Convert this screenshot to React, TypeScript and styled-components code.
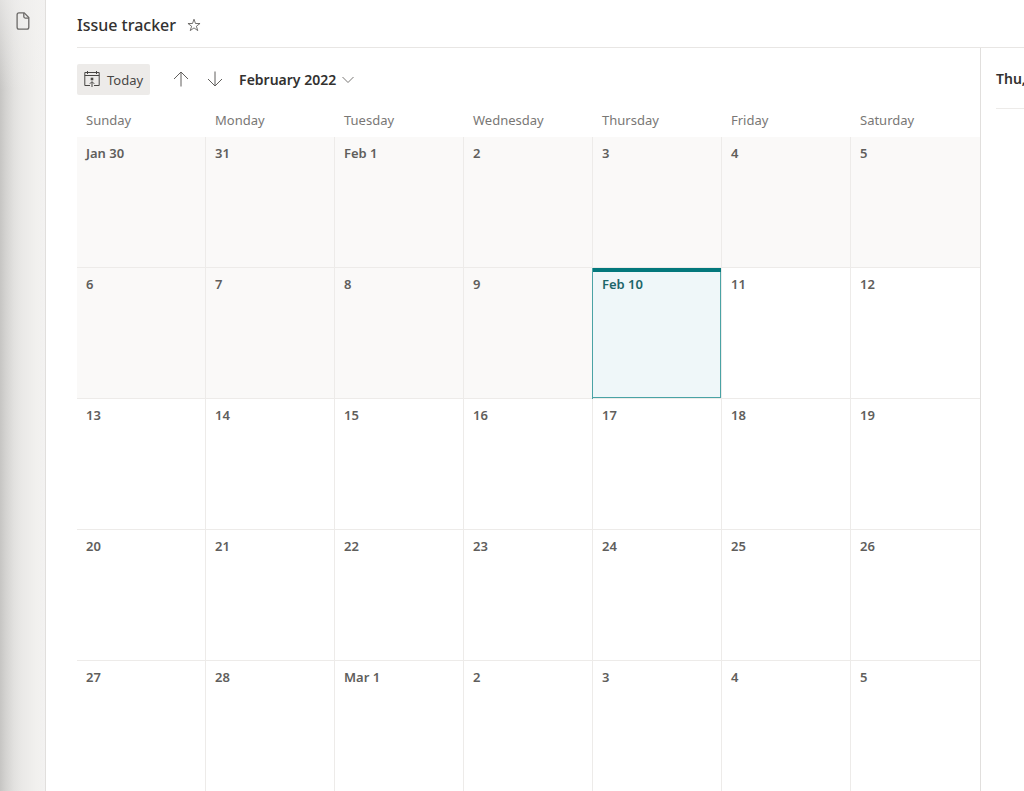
import React from "react";
import styled, { createGlobalStyle, css } from "styled-components";

const GlobalStyle = createGlobalStyle`
  *, *::before, *::after { box-sizing: border-box; }
  body {
    margin: 0;
    background: #ffffff;
    color: #323130;
    font-family: "Segoe UI", "Noto Sans", "Open Sans", sans-serif;
    font-size: 13px;
    line-height: 20px;
  }
  button { font: inherit; color: inherit; }
`;

const Shell = styled.div`
  display: flex;
  min-height: 100vh;
  overflow: hidden;
`;

const Rail = styled.nav`
  flex: none;
  width: 46px;
  padding: 10px 0 0 12px;
  border-right: 1px solid #e1dfdd;
  background:
    linear-gradient(to bottom, rgba(243, 242, 241, 0.6) 0, rgba(243, 242, 241, 0) 90px),
    linear-gradient(to right, #c6c5c3 0, #d4d3d1 6px, #e2e1df 14px, #eae9e7 22px, #f1f0ee 36px, #f3f2f1 46px);
`;

const IconButton = styled.button`
  display: inline-flex;
  align-items: center;
  justify-content: center;
  width: 22px;
  height: 22px;
  padding: 0;
  border: 0;
  background: none;
  color: #605e5c;
  cursor: pointer;
`;

const Main = styled.main`
  flex: 1;
  min-width: 0;
  display: flex;
  flex-direction: column;
  padding-left: 31px;
`;

const Header = styled.header`
  display: flex;
  align-items: center;
  gap: 7px;
  height: 48px;
  padding-top: 2px;
  border-bottom: 1px solid #e8e6e4;
`;

const Title = styled.h1`
  margin: 0;
  font-size: 16px;
  font-weight: 500;
  line-height: 24px;
`;

const Content = styled.div`
  flex: 1;
  display: flex;
`;

const Calendar = styled.section`
  flex: 1;
  min-width: 0;
  border-right: 1px solid #e1dfdd;
`;

const Toolbar = styled.div`
  display: flex;
  align-items: center;
  height: 56px;
  padding-top: 6px;
`;

const TodayButton = styled.button`
  display: flex;
  align-items: center;
  gap: 7px;
  height: 31px;
  margin-right: 20px;
  padding: 0 7px;
  border: 0;
  border-radius: 2px;
  background: #edebe9;
  color: #484644;
  cursor: pointer;
`;

const ButtonText = styled.span`
  padding-top: 2px;
`;

const Arrows = styled.div`
  display: flex;
  gap: 12px;
  margin-right: 13px;
`;

const MonthButton = styled.button`
  display: flex;
  align-items: center;
  gap: 6px;
  padding: 2px 0 0;
  border: 0;
  background: none;
  font-size: 14px;
  font-weight: 600;
  cursor: pointer;
`;

const MonthTable = styled.table`
  width: 100%;
  table-layout: fixed;
  border-collapse: separate;
  border-spacing: 0;
`;

const Weekday = styled.th`
  height: 33px;
  padding: 0 9px 2px;
  color: #797775;
  font-weight: 400;
  text-align: left;
`;

const Day = styled.td<{ $past?: boolean; $today?: boolean }>`
  height: 131px;
  padding: 6px 9px;
  border-right: 1px solid #edebe9;
  border-bottom: 1px solid #edebe9;
  background: ${(p) => (p.$past ? "#faf9f8" : "#ffffff")};
  color: #605e5c;
  font-weight: 600;
  vertical-align: top;

  &:last-child { border-right: 0; }
  tr:last-child > & { height: 130px; border-bottom: 0; }

  ${(p) =>
    p.$today &&
    css`
      background: #eff7f9;
      background-clip: padding-box;
      color: #1c6669;
      box-shadow: inset 0 4px #03787c, inset -1px -1px #4aa3a5, -1px 0 #4aa3a5;
    `}
`;

const Agenda = styled.aside`
  flex: none;
  width: 43px;
  padding-left: 15px;
  overflow: hidden;
`;

const AgendaTitle = styled.h2`
  height: 61px;
  margin: 0;
  padding-top: 21px;
  border-bottom: 1px solid #edebe9;
  font-size: 14px;
  font-weight: 600;
  line-height: 20px;
  white-space: nowrap;
`;

const Svg = ({ size = 16, children }: { size?: number; children: React.ReactNode }) => (
  <svg width={size} height={size} viewBox="0 0 16 16" fill="none" stroke="currentColor" aria-hidden="true">
    {children}
  </svg>
);

const DocumentIcon = () => (
  <svg width="14" height="18" viewBox="0 0 14 18" fill="none" stroke="#6b6967" strokeWidth="1.3" aria-hidden="true">
    <path d="M3 .9h5.2L12.8 5.500V15.200a1.900 1.900 0 0 1-1.900 1.900H3a1.900 1.900 0 0 1-1.900-1.900V2.800A1.900 1.900 0 0 1 3 .9z" />
    <path d="M7.800 1v3.600a1.500 1.500 0 0 0 1.500 1.500h3.500" />
  </svg>
);

const TodayIcon = () => (
  <Svg>
    <path d="M6 14.500H.8v-13h14.400v13H10M.8 4.500h14.400M3.500 0v3M12.500 0v3" />
    <path d="M8 16v-5M5.800 12.800 8 10.600l2.200 2.200" />
    <rect x="7.200" y="7.200" width="1.600" height="1.600" fill="currentColor" />
  </Svg>
);

const weekdays = ["Sunday", "Monday", "Tuesday", "Wednesday", "Thursday", "Friday", "Saturday"];

const weeks = [
  ["Jan 30", "31", "Feb 1", "2", "3", "4", "5"],
  ["6", "7", "8", "9", "Feb 10", "11", "12"],
  ["13", "14", "15", "16", "17", "18", "19"],
  ["20", "21", "22", "23", "24", "25", "26"],
  ["27", "28", "Mar 1", "2", "3", "4", "5"],
];

const TODAY_INDEX = 11;

export default function App() {
  return (
    <>
      <GlobalStyle />
      <Shell>
        <Rail>
          <IconButton aria-label="Files">
            <DocumentIcon />
          </IconButton>
        </Rail>
        <Main>
          <Header>
            <Title>Issue tracker</Title>
            <IconButton aria-label="Add to favorites">
              <Svg size={14}>
                <path d="M8 1.4l1.7 4.9h5.2l-4.2 3.1 1.6 5L8 11.3l-4.3 3.1 1.6-5L1.1 6.3h5.2z" />
              </Svg>
            </IconButton>
          </Header>
          <Content>
            <Calendar>
              <Toolbar>
                <TodayButton>
                  <TodayIcon />
                  <ButtonText>Today</ButtonText>
                </TodayButton>
                <Arrows>
                  <IconButton aria-label="Previous month">
                    <Svg>
                      <path d="M8 15.5V1M1 8l7-7 7 7" />
                    </Svg>
                  </IconButton>
                  <IconButton aria-label="Next month">
                    <Svg>
                      <path d="M8 .5V15M1 8l7 7 7-7" />
                    </Svg>
                  </IconButton>
                </Arrows>
                <MonthButton>
                  February 2022
                  <svg width="12" height="8" viewBox="0 0 12 8" fill="none" stroke="#797775" aria-hidden="true">
                    <path d="M.5 1 6 6.5 11.5 1" />
                  </svg>
                </MonthButton>
              </Toolbar>
              <MonthTable>
                <thead>
                  <tr>
                    {weekdays.map((name) => (
                      <Weekday key={name} scope="col">{name}</Weekday>
                    ))}
                  </tr>
                </thead>
                <tbody>
                  {weeks.map((week, w) => (
                    <tr key={w}>
                      {week.map((label, d) => {
                        const index = w * 7 + d;
                        return (
                          <Day key={d} $past={index < TODAY_INDEX} $today={index === TODAY_INDEX}>
                            {label}
                          </Day>
                        );
                      })}
                    </tr>
                  ))}
                </tbody>
              </MonthTable>
            </Calendar>
            <Agenda>
              <AgendaTitle>Thu,</AgendaTitle>
            </Agenda>
          </Content>
        </Main>
      </Shell>
    </>
  );
}
